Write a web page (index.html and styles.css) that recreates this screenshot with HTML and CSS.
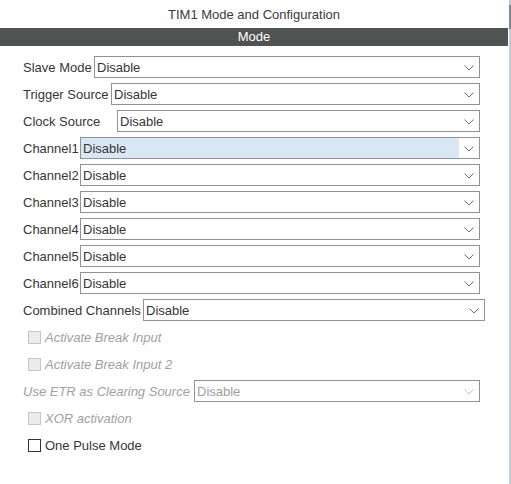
FILE: index.html
```html
<!DOCTYPE html>
<html>
<head>
<meta charset="utf-8">
<link rel="stylesheet" href="styles.css">
</head>
<body>
<div class="panel">
  <div class="title">TIM1 Mode and Configuration</div>
  <div class="bar">Mode</div>
  <div class="form">
    <div class="row"><span class="label w-slave">Slave Mode</span><div class="select"><span class="val">Disable</span><span class="arrow"><svg width="10" height="6" viewBox="0 0 10 6"><path d="M0.5 0.5 L5 5 L9.5 0.5" fill="none" stroke="#707070" stroke-width="1"/></svg></span></div></div>
    <div class="row"><span class="label w-trigger">Trigger Source</span><div class="select"><span class="val">Disable</span><span class="arrow"><svg width="10" height="6" viewBox="0 0 10 6"><path d="M0.5 0.5 L5 5 L9.5 0.5" fill="none" stroke="#707070" stroke-width="1"/></svg></span></div></div>
    <div class="row"><span class="label w-clock">Clock Source</span><div class="select"><span class="val">Disable</span><span class="arrow"><svg width="10" height="6" viewBox="0 0 10 6"><path d="M0.5 0.5 L5 5 L9.5 0.5" fill="none" stroke="#707070" stroke-width="1"/></svg></span></div></div>
    <div class="row"><span class="label w-ch">Channel1</span><div class="select focused"><span class="val">Disable</span><span class="arrow"><svg width="10" height="6" viewBox="0 0 10 6"><path d="M0.5 0.5 L5 5 L9.5 0.5" fill="none" stroke="#707070" stroke-width="1"/></svg></span></div></div>
    <div class="row"><span class="label w-ch">Channel2</span><div class="select"><span class="val">Disable</span><span class="arrow"><svg width="10" height="6" viewBox="0 0 10 6"><path d="M0.5 0.5 L5 5 L9.5 0.5" fill="none" stroke="#707070" stroke-width="1"/></svg></span></div></div>
    <div class="row"><span class="label w-ch">Channel3</span><div class="select"><span class="val">Disable</span><span class="arrow"><svg width="10" height="6" viewBox="0 0 10 6"><path d="M0.5 0.5 L5 5 L9.5 0.5" fill="none" stroke="#707070" stroke-width="1"/></svg></span></div></div>
    <div class="row"><span class="label w-ch">Channel4</span><div class="select"><span class="val">Disable</span><span class="arrow"><svg width="10" height="6" viewBox="0 0 10 6"><path d="M0.5 0.5 L5 5 L9.5 0.5" fill="none" stroke="#707070" stroke-width="1"/></svg></span></div></div>
    <div class="row"><span class="label w-ch">Channel5</span><div class="select"><span class="val">Disable</span><span class="arrow"><svg width="10" height="6" viewBox="0 0 10 6"><path d="M0.5 0.5 L5 5 L9.5 0.5" fill="none" stroke="#707070" stroke-width="1"/></svg></span></div></div>
    <div class="row"><span class="label w-ch">Channel6</span><div class="select"><span class="val">Disable</span><span class="arrow"><svg width="10" height="6" viewBox="0 0 10 6"><path d="M0.5 0.5 L5 5 L9.5 0.5" fill="none" stroke="#707070" stroke-width="1"/></svg></span></div></div>
    <div class="row"><span class="label w-comb">Combined Channels</span><div class="select wide"><span class="val">Disable</span><span class="arrow"><svg width="10" height="6" viewBox="0 0 10 6"><path d="M0.5 0.5 L5 5 L9.5 0.5" fill="none" stroke="#707070" stroke-width="1"/></svg></span></div></div>
    <div class="row check disabled"><span class="box"></span><span class="ctext">Activate Break Input</span></div>
    <div class="row check disabled"><span class="box"></span><span class="ctext">Activate Break Input 2</span></div>
    <div class="row disabled"><span class="label w-etr">Use ETR as Clearing Source</span><div class="select"><span class="val">Disable</span><span class="arrow"><svg width="10" height="6" viewBox="0 0 10 6"><path d="M0.5 0.5 L5 5 L9.5 0.5" fill="none" stroke="#c4c4c4" stroke-width="1"/></svg></span></div></div>
    <div class="row check disabled"><span class="box"></span><span class="ctext">XOR activation</span></div>
    <div class="row check"><span class="box"></span><span class="ctext">One Pulse Mode</span></div>
  </div>
  <div class="scroll"><div class="thumb"></div></div>
</div>
</body>
</html>
```

FILE: styles.css
```css
html, body {
  margin: 0;
  padding: 0;
  background: #ffffff;
}
body {
  font-family: "Liberation Sans", Arial, sans-serif;
  font-size: 13px;
  color: #363636;
}
.panel {
  position: relative;
  width: 511px;
  height: 484px;
  overflow: hidden;
}
.title {
  width: 508px;
  height: 28px;
  line-height: 30px;
  text-align: center;
  color: #3a3a3a;
}
.bar {
  width: 508px;
  height: 18px;
  line-height: 18px;
  background: #505351;
  color: #ffffff;
  text-align: center;
}
.form {
  display: flex;
  flex-direction: column;
  gap: 5px;
  padding: 10px 0 0 23px;
}
.row {
  display: flex;
  align-items: center;
  height: 22px;
}
.label {
  flex: none;
  white-space: nowrap;
  padding-top: 1px;
}
.w-slave { width: 71px; }
.w-trigger { width: 88px; }
.w-clock { width: 94px; }
.w-ch { width: 57px; }
.w-comb { width: 120px; }
.w-etr { width: 171px; }
.select {
  box-sizing: border-box;
  height: 22px;
  flex: 1 1 auto;
  margin-right: 31px;
  border: 1px solid #8f9396;
  display: flex;
  align-items: center;
  background: #ffffff;
}
.select.wide { margin-right: 26px; }
.select .val {
  flex: 1;
  box-sizing: border-box;
  padding-left: 2px;
  padding-top: 1px;
  height: 20px;
  line-height: 20px;
}
.select .arrow {
  flex: none;
  width: 20px;
  height: 20px;
  display: flex;
  align-items: center;
  justify-content: center;
  background: #ffffff;
}
.select .arrow svg { display: block; margin-top: 1px; margin-right: 1px; }
.select.focused .val { background: #d9e7f5; }
.check { padding-left: 5px; }
.box {
  box-sizing: border-box;
  width: 13px;
  height: 13px;
  border: 1px solid #333333;
  background: #ffffff;
  flex: none;
  margin-right: 4px;
}
.ctext { padding-top: 1px; }
.disabled .box {
  border-color: #c6c6c6;
  background: #ececec;
}
.disabled .ctext, .disabled .label {
  font-style: italic;
  color: #a0a0a0;
}
.disabled .select .val { color: #a0a0a0; }
.scroll {
  position: absolute;
  top: 0;
  right: 0;
  width: 2px;
  height: 484px;
  background: #c3ced6;
}
.thumb {
  margin-top: 5px;
  height: 24px;
  background: #7f878d;
}
```
